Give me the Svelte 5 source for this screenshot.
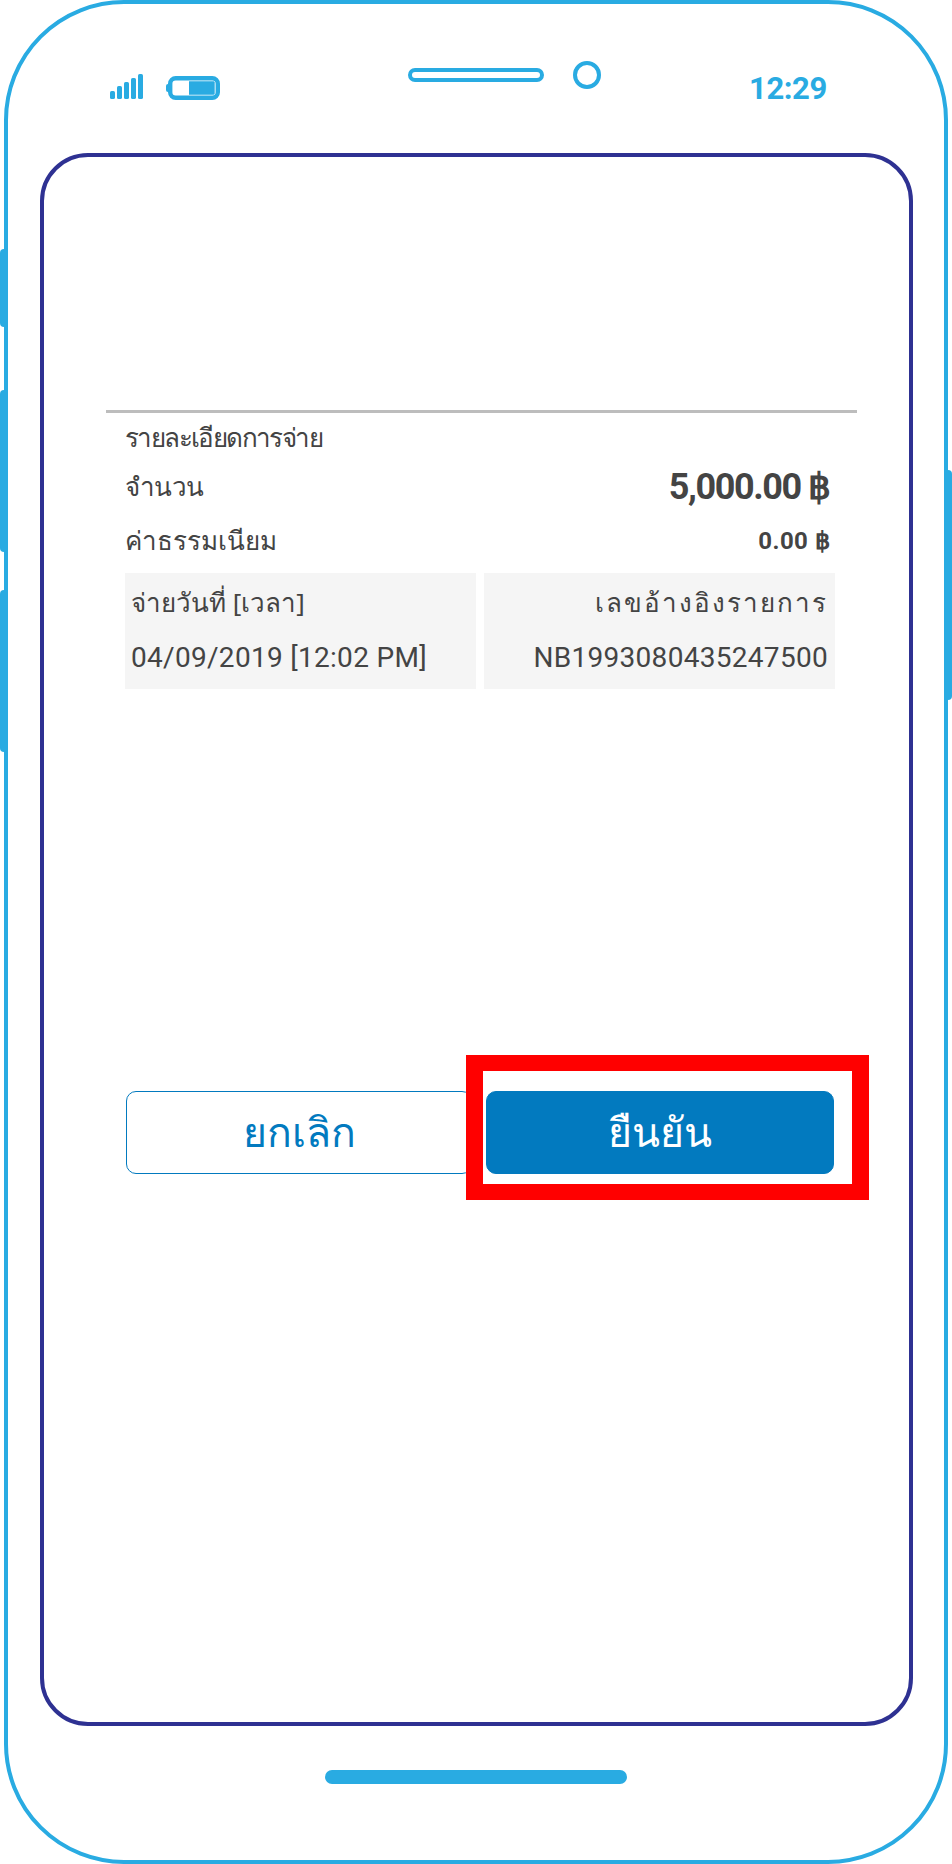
<script lang="ts">
  const bars = [
    { x: 0, y: 17, h: 8 },
    { x: 7, y: 12, h: 13 },
    { x: 14, y: 8, h: 17 },
    { x: 21, y: 4, h: 21 },
    { x: 28, y: 0, h: 25 }
  ];
  const leftKeys = [
    { top: 245, height: 78 },
    { top: 386, height: 162 },
    { top: 586, height: 162 }
  ];
</script>

<div class="phone">
  {#each leftKeys as key}
    <span class="key left" style="top: {key.top}px; height: {key.height}px"></span>
  {/each}
  <span class="key right"></span>

  <header class="status">
    <svg class="signal" width="33" height="25" viewBox="0 0 33 25">
      {#each bars as bar}
        <rect x={bar.x} y={bar.y} width="5" height={bar.h} rx="1.6" fill="#29abe2" />
      {/each}
    </svg>
    <svg class="battery" width="54" height="24" viewBox="0 0 54 24">
      <rect x="0" y="8" width="5" height="8" rx="2" fill="#29abe2" />
      <rect x="4.2" y="2.2" width="47.6" height="19.6" rx="5.5" fill="#fff" stroke="#29abe2" stroke-width="4.4" />
      <path d="M23 5.3h24.5a1.2 1.2 0 0 1 1.2 1.2v11a1.2 1.2 0 0 1-1.2 1.2H23z" fill="#29abe2" />
    </svg>
    <span class="speaker"></span>
    <span class="camera"></span>
    <span class="time">12:29</span>
  </header>

  <main class="screen">
    <hr class="divider" />
    <section class="details">
      <div class="row title">รายละเอียดการจ่าย</div>
      <div class="row amount">
        <span>จำนวน</span>
        <strong>5,000.00 ฿</strong>
      </div>
      <div class="row fee">
        <span>ค่าธรรมเนียม</span>
        <strong>0.00 ฿</strong>
      </div>
      <div class="cells">
        <div class="cell">
          <span>จ่ายวันที่ [เวลา]</span>
          <span class="value">04/09/2019 [12:02 PM]</span>
        </div>
        <div class="cell end">
          <span class="ref-label">เลขอ้างอิงรายการ</span>
          <span class="value">NB1993080435247500</span>
        </div>
      </div>
    </section>
    <div class="actions">
      <button class="btn cancel">ยกเลิก</button>
      <button class="btn confirm">ยืนยัน</button>
    </div>
  </main>

  <span class="home"></span>
  <span class="highlight"></span>
</div>

<style>
  :global(body) {
    background: #fff;
  }

  .phone {
    position: relative;
    box-sizing: border-box;
    width: 944px;
    height: 1864px;
    margin-left: 4px;
    border: 4px solid #29abe2;
    border-radius: 120px;
    background: #fff;
    font-family: "Noto Sans", "Noto Sans CJK SC", sans-serif;
    color: #444;
  }

  .key {
    position: absolute;
    width: 8px;
    background: #29abe2;
  }

  .key.left {
    left: -8px;
    border-radius: 4px 0 0 4px;
  }

  .key.right {
    right: -8px;
    top: 466px;
    height: 230px;
    border-radius: 0 4px 4px 0;
  }

  .status {
    display: flex;
    align-items: flex-start;
    height: 149px;
    padding-left: 102px;
  }

  .signal {
    margin-top: 70px;
    flex: none;
  }

  .battery {
    margin: 72px 0 0 23px;
    flex: none;
  }

  .speaker {
    box-sizing: border-box;
    flex: none;
    width: 136px;
    height: 14px;
    margin: 64px 0 0 188px;
    border: 4px solid #29abe2;
    border-radius: 7px;
  }

  .camera {
    box-sizing: border-box;
    flex: none;
    width: 28px;
    height: 28px;
    margin: 57px 0 0 29px;
    border: 4px solid #29abe2;
    border-radius: 50%;
  }

  .time {
    margin: 66px 0 0 148px;
    font: 700 31px/38px Roboto, sans-serif;
    letter-spacing: -0.4px;
    color: #29abe2;
  }

  .screen {
    box-sizing: border-box;
    height: 1573px;
    margin: 0 31px 0 32px;
    padding-top: 253px;
    border: 4px solid #2e3192;
    border-radius: 48px;
  }

  .divider {
    height: 3px;
    margin: 0 52px 0 62px;
    border: 0;
    background: #bdbdbd;
  }

  .details {
    margin: 0 74px 0 81px;
    font-size: 26px;
  }

  .row {
    box-sizing: border-box;
    display: flex;
    align-items: center;
    justify-content: space-between;
    height: 50px;
  }

  .title {
    letter-spacing: -1.6px;
    padding-bottom: 2px;
  }

  .amount {
    padding-bottom: 3px;
  }

  .amount span {
    letter-spacing: -0.7px;
  }

  .fee {
    height: 60px;
    padding-bottom: 5px;
  }

  .row strong {
    padding-right: 5px;
    font-family: Roboto, "Noto Sans", sans-serif;
    font-weight: 700;
  }

  .amount strong {
    font-size: 36px;
    letter-spacing: -1.4px;
  }

  .fee strong {
    font-size: 24px;
    letter-spacing: 0.4px;
  }

  .cells {
    display: grid;
    grid-template-columns: 351px 351px;
    gap: 8px;
  }

  .cell {
    display: flex;
    flex-direction: column;
    height: 116px;
    padding: 0 7px 0 6px;
    background: #f5f5f5;
  }

  .cell span {
    height: 58px;
    line-height: 58px;
    white-space: nowrap;
  }

  .cell .value {
    font-family: Roboto, "Noto Sans", sans-serif;
    font-size: 28px;
    letter-spacing: 0.3px;
    line-height: 54px;
  }

  .cell.end {
    align-items: flex-end;
  }

  .ref-label {
    letter-spacing: 2px;
  }

  .actions {
    display: flex;
    gap: 14px;
    margin: 402px 75px 0 82px;
  }

  .btn {
    box-sizing: border-box;
    height: 83px;
    border: 1px solid #027abf;
    border-radius: 10px;
    font: 400 41px "Noto Sans", sans-serif;
  }

  .cancel {
    width: 346px;
    background: #fff;
    color: #027abf;
  }

  .confirm {
    width: 348px;
    background: #027abf;
    color: #fff;
  }

  .home {
    display: block;
    width: 302px;
    height: 14px;
    margin: 44px auto 0;
    border-radius: 7px;
    background: #29abe2;
  }

  .highlight {
    position: absolute;
    box-sizing: border-box;
    left: 458px;
    top: 1051px;
    width: 403px;
    height: 145px;
    border: solid #f00;
    border-width: 16px 17px;
  }
</style>
